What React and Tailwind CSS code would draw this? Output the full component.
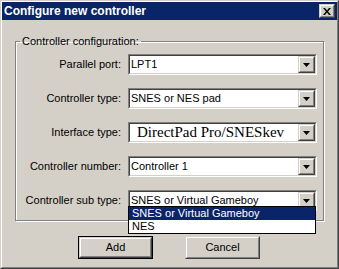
import React from 'react';

const FONT = { fontFamily: '"Liberation Sans", Arial, sans-serif' };

function Raised({ className = '', children }) {
  return (
    <div className={`border border-t-[#d4d0c8] border-l-[#d4d0c8] border-r-[#404040] border-b-[#404040] ${className}`}>
      <div className="flex h-full w-full items-center justify-center border border-t-white border-l-white border-r-[#808080] border-b-[#808080] bg-[#d4d0c8]">
        {children}
      </div>
    </div>
  );
}

function Combo({ children, serif = false, open = false }) {
  return (
    <div className="relative w-[189px]">
      <div className="h-[21px] border border-t-[#808080] border-l-[#808080] border-r-white border-b-white">
        <div className="flex h-full border border-t-[#404040] border-l-[#404040] border-r-[#d4d0c8] border-b-[#d4d0c8] bg-white">
          <div
            className={`flex flex-1 items-center overflow-hidden whitespace-nowrap text-black ${
              serif ? 'pl-[7px] text-[15px] font-[Liberation_Serif,serif]' : 'pl-[1px] text-[11px]'
            }`}
          >
            {children}
          </div>
          <Raised className="h-full w-[17px]">
            <svg width="7" height="4" viewBox="0 0 7 4">
              <path d="M0 0h7L3.5 4z" fill="#000" />
            </svg>
          </Raised>
        </div>
      </div>

      {/* open drop-down list */}
      {open && (
        <div className="absolute left-0 top-[16px] z-10 w-[188px] border border-black bg-white text-[11px] leading-[13px]">
          <div className="bg-[#0a246a] pl-[3px] text-white">SNES or Virtual Gameboy</div>
          <div className="pl-[3px] text-black">NES</div>
        </div>
      )}
    </div>
  );
}

function Row({ label, children }) {
  return (
    <div className="flex items-center">
      <div className="w-[105px] text-right text-[11px] text-black">{label}</div>
      <div className="ml-[7px]">{children}</div>
    </div>
  );
}

export default function App() {
  return (
    <div
      style={FONT}
      className="h-[269px] w-[339px] overflow-hidden border border-t-[#d4d0c8] border-l-[#d4d0c8] border-r-[#404040] border-b-[#404040] bg-[#d4d0c8]"
    >
      <div className="flex h-full flex-col border border-t-white border-l-white border-r-[#808080] border-b-[#808080]">
        {/* title bar */}
        <div className="flex h-[18px] items-center justify-between bg-[#0a246a] pl-[2px] pr-[2px]">
          <span className="text-[12px] font-bold text-white">Configure new controller</span>
          <Raised className="h-[14px] w-[16px]">
            <svg width="8" height="7" viewBox="0 0 8 7">
              <path d="M0 0h2l2 2.5L6 0h2L5 3.5 8 7H6L4 4.5 2 7H0l3-3.5z" fill="#000" />
            </svg>
          </Raised>
        </div>

        {/* group box */}
        <fieldset className="mx-[13px] mt-[15px] border border-[#808080] px-0 pb-[9px] pt-[6px] shadow-[inset_1px_1px_white,1px_1px_white]">
          <legend className="ml-[4px] px-[2px] text-[11px] leading-[13px] text-black">Controller configuration:</legend>
          <div className="flex flex-col gap-[13px]">
            <Row label="Parallel port:">
              <Combo>LPT1</Combo>
            </Row>
            <Row label="Controller type:">
              <Combo>SNES or NES pad</Combo>
            </Row>
            <Row label="Interface type:">
              <Combo serif>DirectPad Pro/SNESkev</Combo>
            </Row>
            <Row label="Controller number:">
              <Combo>Controller 1</Combo>
            </Row>
            <Row label="Controller sub type:">
              <Combo open>SNES or Virtual Gameboy</Combo>
            </Row>
          </div>
        </fieldset>

        {/* buttons */}
        <div className="mt-[15px] flex gap-[32px] pl-[76px]">
          <div className="border border-black">
            <Raised className="h-[21px] w-[73px]">
              <span className="text-[11px] text-black">Add</span>
            </Raised>
          </div>
          <Raised className="h-[23px] w-[75px]">
            <span className="text-[11px] text-black">Cancel</span>
          </Raised>
        </div>
      </div>
    </div>
  );
}
